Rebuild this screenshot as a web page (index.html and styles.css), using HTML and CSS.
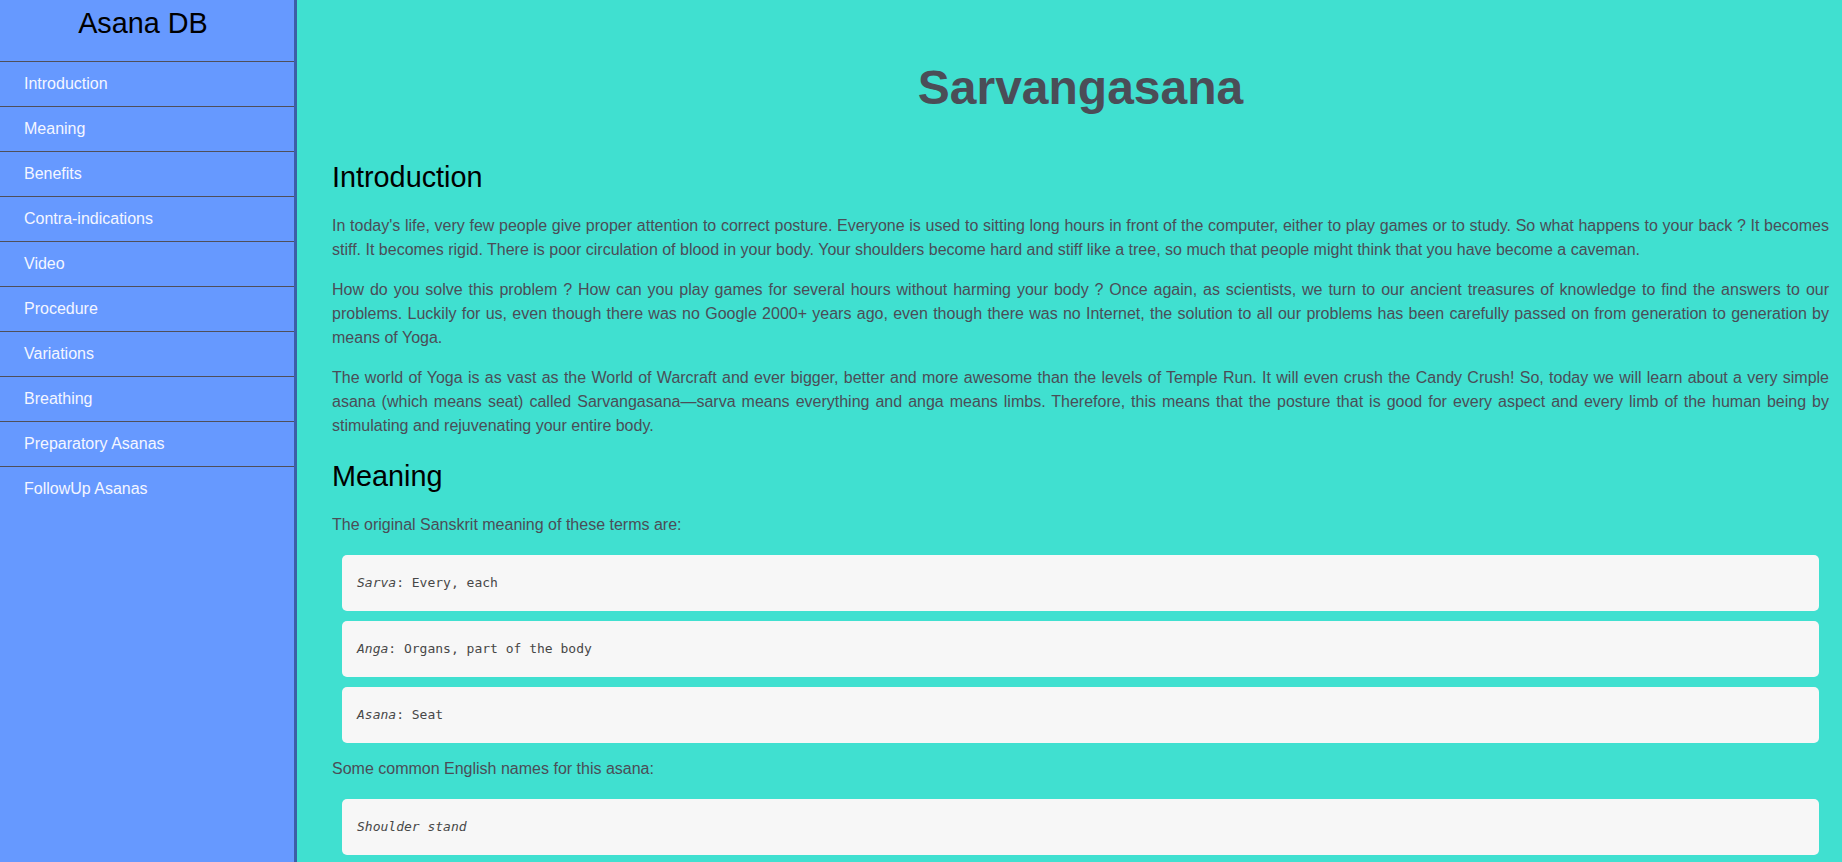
FILE: index.html
```html
<!DOCTYPE html>
<html lang="en">
<head>
<meta charset="utf-8">
<title>Asana DB - Sarvangasana</title>
<link rel="stylesheet" href="styles.css">
</head>
<body>
<div class="page">
  <nav class="sidebar">
    <header class="brand">Asana DB</header>
    <ul class="nav">
      <li class="nav-item"><a href="#introduction">Introduction</a></li>
      <li class="nav-item"><a href="#meaning">Meaning</a></li>
      <li class="nav-item"><a href="#benefits">Benefits</a></li>
      <li class="nav-item"><a href="#contra">Contra-indications</a></li>
      <li class="nav-item"><a href="#video">Video</a></li>
      <li class="nav-item"><a href="#procedure">Procedure</a></li>
      <li class="nav-item"><a href="#variations">Variations</a></li>
      <li class="nav-item"><a href="#breathing">Breathing</a></li>
      <li class="nav-item"><a href="#preparatory">Preparatory Asanas</a></li>
      <li class="nav-item"><a href="#followup">FollowUp Asanas</a></li>
    </ul>
  </nav>
  <main class="content">
    <h1 class="title">Sarvangasana</h1>
    <section id="introduction">
      <h2 class="section-title">Introduction</h2>
      <p class="text">In today's life, very few people give proper attention to correct posture. Everyone is used to sitting long hours in front of the computer, either to play games or to study. So what happens to your back ? It becomes stiff. It becomes rigid. There is poor circulation of blood in your body. Your shoulders become hard and stiff like a tree, so much that people might think that you have become a caveman.</p>
      <p class="text">How do you solve this problem ? How can you play games for several hours without harming your body ? Once again, as scientists, we turn to our ancient treasures of knowledge to find the answers to our problems. Luckily for us, even though there was no Google 2000+ years ago, even though there was no Internet, the solution to all our problems has been carefully passed on from generation to generation by means of Yoga.</p>
      <p class="text">The world of Yoga is as vast as the World of Warcraft and ever bigger, better and more awesome than the levels of Temple Run. It will even crush the Candy Crush! So, today we will learn about a very simple asana (which means seat) called Sarvangasana—sarva means everything and anga means limbs. Therefore, this means that the posture that is good for every aspect and every limb of the human being by stimulating and rejuvenating your entire body.</p>
    </section>
    <section id="meaning">
      <h2 class="section-title">Meaning</h2>
      <p class="text">The original Sanskrit meaning of these terms are:</p>
      <ul class="code-list">
        <li class="code-item"><code><em>Sarva</em>: Every, each</code></li>
        <li class="code-item"><code><em>Anga</em>: Organs, part of the body</code></li>
        <li class="code-item"><code><em>Asana</em>: Seat</code></li>
      </ul>
      <p class="text">Some common English names for this asana:</p>
      <ul class="code-list">
        <li class="code-item"><code><em>Shoulder stand</em></code></li>
      </ul>
    </section>
  </main>
</div>
</body>
</html>
```
FILE: styles.css
```css
html, body {
  margin: 0;
  padding: 0;
}

body {
  font-family: "Liberation Sans", Arial, sans-serif;
  font-size: 16px;
  background: #40e0d0;
}

.page {
  display: flex;
  height: 100vh;
  overflow: hidden;
}

.sidebar {
  width: 294px;
  flex: 0 0 294px;
  background: #6699ff;
  border-right: 3px solid #3d5ea6;
  height: 100%;
}

.brand {
  height: 61px;
  box-sizing: border-box;
  padding: 7px 8px 0 0;
  font-size: 28.8px;
  line-height: 32px;
  text-align: center;
  color: #000;
}

.nav {
  list-style: none;
  margin: 0;
  padding: 0;
}

.nav-item {
  border-top: 1px solid #4f4f5a;
  height: 44px;
  display: flex;
  align-items: center;
  padding-left: 24px;
}

.nav-item a {
  color: #f4f6ff;
  text-decoration: none;
  font-size: 16px;
}

.content {
  flex: 1;
  padding: 0 13px 0 35px;
  overflow: hidden;
  color: #4b4d57;
}

.title {
  margin: 60px 0 46px;
  font-size: 48px;
  font-weight: bold;
  line-height: 55px;
  text-align: center;
  color: #4b4d57;
}

.section-title {
  margin: 22px 0 20px;
  font-size: 28.8px;
  font-weight: normal;
  line-height: 33px;
  color: #000;
}

.text {
  margin: 16px 0;
  line-height: 24px;
  text-align: justify;
}

.code-list {
  list-style: none;
  margin: 18px 10px 14px;
  padding: 0;
  display: flex;
  flex-direction: column;
  gap: 10px;
}

.code-list + .text {
  margin-top: 14px;
}

.code-item {
  background: #f7f7f7;
  border-radius: 5px;
  height: 56px;
  box-sizing: border-box;
  padding: 0 15px;
  display: flex;
  align-items: center;
}

.code-item code {
  display: block;
  font-family: "DejaVu Sans Mono", monospace;
  font-size: 13px;
  line-height: 16px;
  color: #474747;
}
```
